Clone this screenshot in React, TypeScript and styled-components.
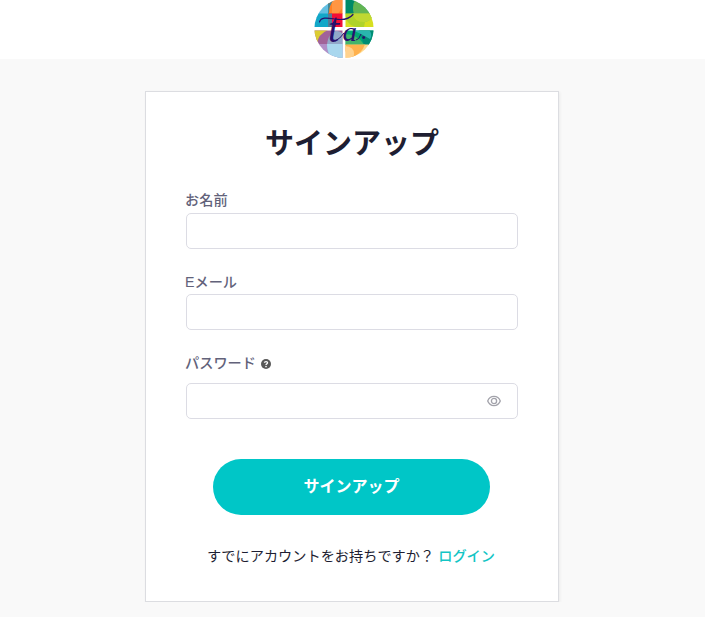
import React from "react";
import styled, { createGlobalStyle } from "styled-components";

const GlobalStyle = createGlobalStyle`
  * { box-sizing: border-box; }
  body {
    margin: 0;
    background: #f9f9f9;
    color: #1e1e32;
    font-family: "Liberation Sans", "Noto Sans CJK JP", sans-serif;
    overflow: hidden;
  }
`;

const Header = styled.header`
  height: 59px;
  display: flex;
  justify-content: center;
  background: #fff;
  padding-right: 17px;
  padding-left: 16px;
`;

const Logo = styled.svg`
  display: block;
  width: 60px;
  height: 59px;
  margin-right: 16px;
`;

const Card = styled.main`
  width: 414px;
  height: 511px;
  margin: 32px 0 0 145px;
  padding: 31px 40px 0;
  display: flex;
  flex-direction: column;
  background: #fff;
  border: 1px solid #dcdde1;
  box-shadow: 1px 1px 3px rgba(0, 0, 0, 0.06);
`;

const Title = styled.h1`
  margin: 0 0 26px;
  font-size: 29px;
  line-height: 42px;
  font-weight: 700;
  text-align: center;
  white-space: nowrap;
`;

const Field = styled.div<{ $height: number; $gap?: number }>`
  height: ${(p) => p.$height}px;
  display: flex;
  flex-direction: column;
  gap: ${(p) => p.$gap ?? 3}px;
`;

const Label = styled.label`
  display: flex;
  align-items: center;
  gap: 5px;
  height: 19px;
  margin-left: -1px;
  font-size: 14.2px;
  line-height: 19px;
  font-weight: 500;
  color: #62627a;
`;

const InputBox = styled.div`
  display: flex;
  align-items: center;
  height: 36px;
  padding-right: 16px;
  border: 1px solid #dcdce4;
  border-radius: 5px;
  background: #fff;
`;

const Input = styled.input`
  flex: 1;
  min-width: 0;
  height: 100%;
  padding: 0 12px;
  border: 0;
  outline: 0;
  background: transparent;
  font: inherit;
`;

const Icon = styled.svg`
  display: block;
  flex: none;
`;

const SubmitButton = styled.button`
  align-self: center;
  width: 277px;
  height: 56px;
  margin-right: 1px;
  padding: 0;
  border: 0;
  border-radius: 28px;
  background: #00c6c7;
  color: #fff;
  font: 700 16px/56px "Liberation Sans", "Noto Sans CJK JP", sans-serif;
`;

const Footer = styled.p`
  display: flex;
  justify-content: center;
  gap: 4px;
  margin: 31px 2px 0 0;
  font-size: 14.2px;
  line-height: 20px;
  white-space: nowrap;
`;

const LoginLink = styled.a`
  color: #13c5c5;
  font-weight: 500;
`;

const BrandLogo = () => (
  <Logo viewBox="0 0 60 59" role="img" aria-label="ta.">
    <defs>
      <clipPath id="disc"><circle cx="30" cy="28.5" r="29.6" /></clipPath>
      <clipPath id="upperRight"><path d="M31.5 0H60V27H31.5Z" /></clipPath>
      <clipPath id="lowerLeft"><path d="M0 30.5H28.5V59H0Z" /></clipPath>
      <clipPath id="lowerRight"><path d="M31.5 30.5H60V59H31.5Z" /></clipPath>
    </defs>
    <g clipPath="url(#disc)">
      <path fill="#62bfe2" d="M0 0H15V14H0Z" />
      <path fill="#12a7c8" d="M0 13.5H15V27H0Z" />
      <path fill="#ff8124" d="M14 0H28.5V14H14Z" />
      <path fill="#438795" d="M14 0H20Q15 5 15 13H14Z" />
      <path fill="#ffa75d" d="M18 0H28.5V8L24 13.5H18Z" opacity=".55" />
      <path fill="#f20e37" d="M14 13.5H28.5V27H14Z" />
      <path fill="#537b96" d="M14 13.5H18V27H14Z" />
      <g clipPath="url(#upperRight)">
        <path fill="#008a68" d="M31 0H60V14H31Z" />
        <path fill="#d7df20" d="M31 13.5H60V27H31Z" />
        <ellipse cx="50" cy="8" rx="11" ry="14" fill="#83c34c" opacity=".75" />
        <path fill="#afd32b" d="M31 14H39Q42 23 51 22L50 27H41Q32 24 31 14Z" />
        <path fill="#bfd832" d="M39 13.5H60Q58 21 51 22Q42 23 39 13.5Z" />
      </g>
      <g clipPath="url(#lowerLeft)">
        <path fill="#a16399" d="M0 30H29V44H0Z" />
        <path fill="#dccc32" d="M0 30H14Q4 34 3 44H0Z" />
        <path fill="#b18ec7" d="M3 44H29V59H0Z" />
        <ellipse cx="23" cy="46" rx="10" ry="15" fill="#8dbfd9" opacity=".75" />
        <path fill="#a9d7ee" d="M13 44H29V59H19Q13 53 13 44Z" />
      </g>
      <g clipPath="url(#lowerRight)">
        <path fill="#00a875" d="M31 30H60V45H31Z" />
        <path fill="#008c74" d="M45 30H60V45H50Z" />
        <path fill="#29b5ae" d="M38 30H55Q59 34 56 39Q48 34 38 30Z" />
        <path fill="#ffda90" d="M31 44.5H60V59H31Z" />
        <path fill="#ffb14d" d="M31 44.5H51Q48 53 38 58L31 51Z" />
        <path fill="#ffd28e" d="M31 46Q43 47 39 59H31Z" />
        <path fill="#79bd65" d="M31 34Q43 34 50 44.5H31Z" opacity=".55" />
      </g>
    </g>
    <path
      d="M5.5 22C7 16.5 14 18 21 19C30 20.5 36 18 39 14.5"
      fill="none"
      stroke="#28106e"
      strokeWidth="1.2"
      strokeLinecap="round"
    />
    <g fill="#28106e" fontFamily="Liberation Serif, serif" fontStyle="italic">
      <text x="14" y="41.5" fontSize="43" textLength="11" lengthAdjust="spacingAndGlyphs">t</text>
      <text x="28.5" y="41" fontSize="27" textLength="14.5" lengthAdjust="spacingAndGlyphs">a</text>
      <text x="47.3" y="38.5" fontSize="25">.</text>
    </g>
    <path d="M21 41Q26 39 30 33M42 40Q45 40 47 34" fill="none" stroke="#28106e" strokeWidth="1" />
  </Logo>
);

const HelpIcon = () => (
  <Icon width="10" height="10" viewBox="0 0 10 10" aria-label="ヘルプ">
    <circle cx="5" cy="5" r="5" fill="#585858" />
    <path d="M3.4 3.8C3.5 2.1 6.6 2.1 6.6 3.8C6.6 4.9 5 4.8 5 5.9" fill="none" stroke="#fff" strokeWidth="1.3" />
    <circle cx="5" cy="7.6" r=".8" fill="#fff" />
  </Icon>
);

const EyeIcon = () => (
  <Icon width="14" height="12" viewBox="0 0 14 12" fill="none" stroke="#a2a2aa" strokeWidth="1.3" aria-label="パスワードを表示">
    <path d="M.7 6C3.1-.1 10.9-.1 13.3 6C10.9 12.1 3.1 12.1.7 6Z" />
    <circle cx="7" cy="6" r="2.6" />
  </Icon>
);

export default function App() {
  return (
    <>
      <GlobalStyle />
      <Header><BrandLogo /></Header>
      <Card>
        <Title>サインアップ</Title>
        <Field $height={82}>
          <Label htmlFor="name">お名前</Label>
          <InputBox><Input id="name" /></InputBox>
        </Field>
        <Field $height={81} $gap={2}>
          <Label htmlFor="email">Eメール</Label>
          <InputBox><Input id="email" type="email" /></InputBox>
        </Field>
        <Field $height={105} $gap={10}>
          <Label htmlFor="password">パスワード<HelpIcon /></Label>
          <InputBox><Input id="password" type="password" /><EyeIcon /></InputBox>
        </Field>
        <SubmitButton type="button">サインアップ</SubmitButton>
        <Footer><span>すでにアカウントをお持ちですか？</span><LoginLink>ログイン</LoginLink></Footer>
      </Card>
    </>
  );
}
